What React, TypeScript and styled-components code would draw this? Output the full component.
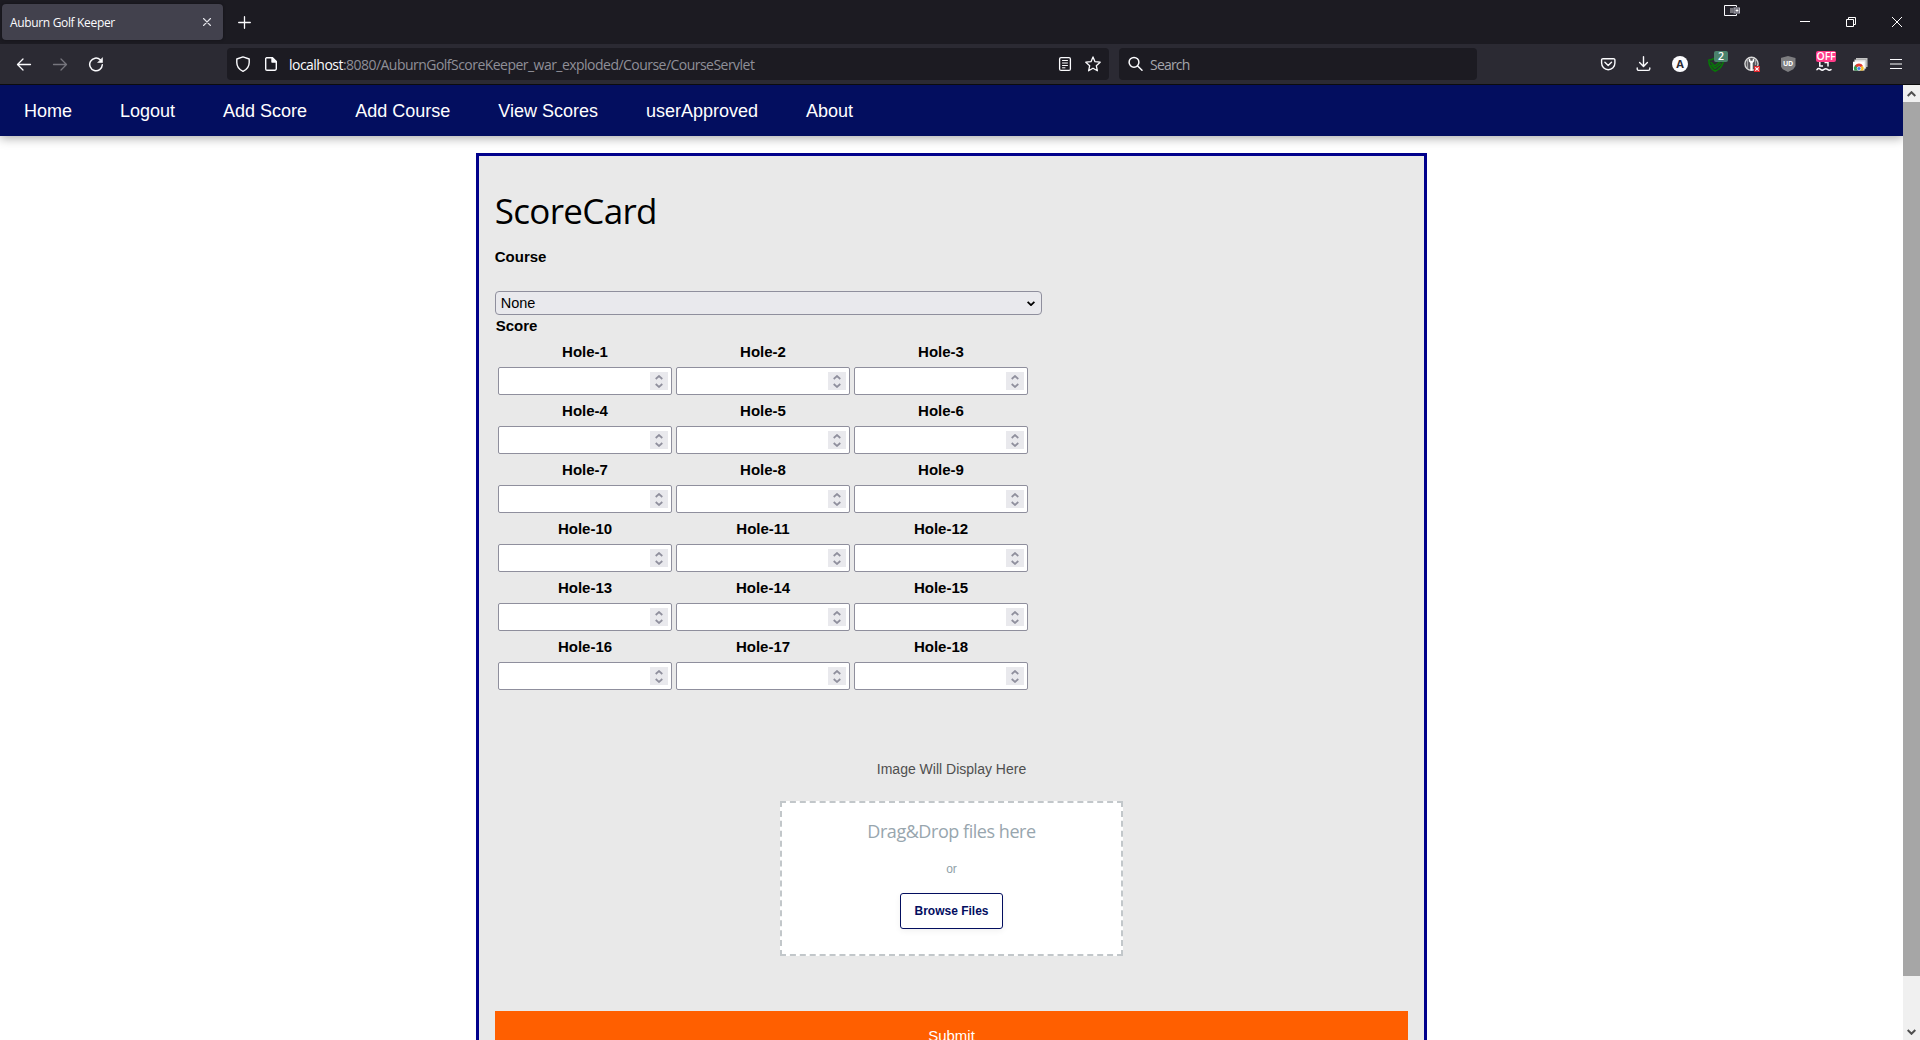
import React from "react";
import styled, { createGlobalStyle } from "styled-components";

const UI = `"Open Sans", "Noto Sans", sans-serif`;
const ARIAL = `"Liberation Sans", Arial, sans-serif`;

const GlobalStyle = createGlobalStyle`
  *, *::before, *::after { box-sizing: border-box; }
  html, body { margin: 0; padding: 0; overflow: hidden; background: #fff; }
  svg { display: block; flex: none; }
`;

const Window = styled.div`
  display: flex;
  flex-direction: column;
  width: 1920px;
  height: 1040px;
  overflow: hidden;
  font-family: ${ARIAL};
`;

/* ---------- browser chrome ---------- */

const TabBar = styled.div`
  display: flex;
  align-items: flex-start;
  height: 44px;
  padding: 4px 0 0 2px;
  background: #1c1b22;
`;

const Tab = styled.div`
  display: flex;
  align-items: center;
  justify-content: space-between;
  width: 221px;
  height: 36px;
  padding: 0 12px 0 8px;
  border-radius: 4px;
  background: #42414d;
  box-shadow: 0 0 3px rgba(0, 0, 0, 0.4);
`;

const TabTitle = styled.span`
  padding-top: 1px;
  font: 12px/18px ${UI};
  letter-spacing: -0.34px;
  color: #fbfbfe;
  white-space: nowrap;
`;

const NewTab = styled.div`
  display: flex;
  justify-content: center;
  width: 43px;
  padding-top: 12px;
`;

const Spacer = styled.div`
  flex: 1;
`;

const CastIndicator = styled.div`
  width: 16px;
  margin: 1px 42px 0 0;
`;

const WindowButton = styled.div`
  display: flex;
  align-items: center;
  justify-content: center;
  width: 46px;
  height: 36px;
`;

const WindowButtons = styled.div`
  display: flex;
`;

const ToolBar = styled.div`
  display: flex;
  align-items: center;
  height: 41px;
  border-bottom: 1px solid #0c0c0d;
  background: #2b2a33;
`;

const NavButtons = styled.div`
  display: flex;
  width: 227px;
  padding-left: 6px;
`;

const ToolCell = styled.div`
  position: relative;
  display: flex;
  align-items: center;
  justify-content: center;
  width: 36px;
  height: 32px;
`;

const Field = styled.div<{ $w: number; $ml?: number }>`
  display: flex;
  align-items: center;
  width: ${(p) => p.$w}px;
  height: 32px;
  margin-left: ${(p) => p.$ml ?? 0}px;
  padding: 0 8px;
  border-radius: 4px;
  background: #1c1b22;
`;

const FieldIcons = styled.div<{ $gap: number }>`
  display: flex;
  gap: ${(p) => p.$gap}px;
`;

const Url = styled.span`
  flex: 1;
  margin-left: 10px;
  padding-top: 2px;
  font: 14px/20px ${UI};
  letter-spacing: -0.53px;
  color: #8f8f98;
  white-space: nowrap;

  b {
    font-weight: 400;
    color: #fbfbfe;
  }
`;

const SearchHint = styled.span`
  margin-left: 7px;
  padding-top: 2px;
  font: 14px/20px ${UI};
  letter-spacing: -0.8px;
  color: #a5a5ab;
`;

const Extensions = styled.div`
  display: flex;
  padding-right: 6px;
`;

const Badge = styled.span<{ $bg: string; $left: number; $w: number }>`
  position: absolute;
  top: 3px;
  left: ${(p) => p.$left}px;
  width: ${(p) => p.$w}px;
  height: 11px;
  border-radius: 2px;
  background: ${(p) => p.$bg};
  color: #fff;
  font: 600 10.5px/11px ${UI};
  letter-spacing: -0.2px;
  text-align: center;
`;

/* ---------- page ---------- */

const Viewport = styled.div`
  display: flex;
  height: 955px;
`;

const Page = styled.div`
  display: flex;
  flex-direction: column;
  width: 1903px;
  height: 955px;
  overflow: hidden;
  background: #fff;
`;

const SiteNav = styled.nav`
  display: flex;
  flex: none;
  height: 51px;
  background: #030e5f;
  box-shadow: 0 2px 10px rgba(0, 0, 0, 0.35);
`;

const SiteLink = styled.a`
  padding: 0 24px;
  font: 18px/52px ${ARIAL};
  color: #fff;
  white-space: nowrap;
`;

const Card = styled.main`
  flex: none;
  width: 951.5px;
  height: 960px;
  margin: 17px auto 0;
  padding: 16px;
  border: 3px solid #00008b;
  background: #e9e9e9;
`;

const Title = styled.h1`
  margin: 0;
  font: 400 35px/77px ${UI};
  letter-spacing: -0.68px;
  color: #000;
`;

const Label = styled.div<{ $lh: number; $indent?: number }>`
  padding-left: ${(p) => p.$indent ?? 0}px;
  font: bold 15px/${(p) => p.$lh}px ${ARIAL};
  color: #000;
`;

const Select = styled.div`
  display: flex;
  align-items: center;
  justify-content: space-between;
  width: 547px;
  height: 24px;
  margin-top: 26px;
  padding: 0 6px 0 5px;
  border: 1px solid #8f8f9d;
  border-radius: 4px;
  background: #e9e9ed;
  font: 14.5px/22px ${ARIAL};
  color: #000;
`;

const Holes = styled.div`
  display: grid;
  grid-template-columns: repeat(3, 174px);
  column-gap: 4px;
  padding-left: 3.25px;
`;

const Hole = styled.label`
  display: flex;
  flex-direction: column;
  height: 59px;
  font: bold 15px/31px ${ARIAL};
  text-align: center;
  color: #000;
`;

const NumberBox = styled.span`
  display: flex;
  align-items: center;
  justify-content: flex-end;
  height: 28px;
  padding-right: 3px;
  border: 1px solid #8f8f9d;
  border-radius: 2px;
  background: #fff;
`;

const Spinner = styled.span`
  display: flex;
  align-items: center;
  justify-content: center;
  width: 18px;
  height: 18px;
  background: #e9e9ed;
`;

const Preview = styled.div`
  margin: 69px 0 22px;
  font: 14px/20px ${ARIAL};
  text-align: center;
  color: #4f4f4f;
`;

const DropZone = styled.div`
  display: flex;
  flex-direction: column;
  align-items: center;
  width: 343px;
  height: 155px;
  margin: 0 auto;
  padding-top: 16px;
  border: 2px dashed #c2c7ca;
  background: #fff;
`;

const DropHint = styled.div`
  font: 400 18px/24px ${UI};
  letter-spacing: -0.45px;
  color: #98a6ae;
  white-space: nowrap;
`;

const DropOr = styled.div`
  margin: 18px 0 16px;
  font: 12px/16px ${ARIAL};
  color: #90a0a8;
`;

const Browse = styled.button`
  width: 103px;
  height: 36px;
  padding: 0;
  border: 1px solid #030e5f;
  border-radius: 3px;
  background: #fff;
  box-shadow: 0 2px 6px rgba(0, 0, 0, 0.06);
  font: bold 12px/34px ${ARIAL};
  color: #030e5f;
`;

const Submit = styled.button`
  display: block;
  width: 100%;
  height: 50px;
  margin-top: 55px;
  padding: 0;
  border: 0;
  background: #ff5f00;
  font: 15px/50px ${ARIAL};
  color: #fff;
`;

const ScrollBar = styled.div`
  display: flex;
  flex-direction: column;
  width: 17px;
  height: 955px;
  background: #f0f0f0;
`;

const ScrollArrow = styled.div`
  display: flex;
  align-items: center;
  justify-content: center;
  height: 17px;
`;

const ScrollThumb = styled.div`
  height: 874px;
  margin-bottom: auto;
  background: #a6a6a6;
`;

/* ---------- icons ---------- */

type IconProps = { size?: number; color?: string; width?: number; children: React.ReactNode };

const Icon = ({ size = 16, color = "#fbfbfe", width = 1.3, children }: IconProps) => (
  <svg
    width={size}
    height={size}
    viewBox={`0 0 ${size} ${size}`}
    fill="none"
    stroke={color}
    strokeWidth={width}
    strokeLinecap="round"
    strokeLinejoin="round"
  >
    {children}
  </svg>
);

const BackIcon = () => (
  <Icon>
    <path d="M14.5 8.5H1.6M7 3 1.5 8.5 7 14" />
  </Icon>
);

const ForwardIcon = () => (
  <Icon color="#76757d">
    <path d="M1.5 8.5h12.9M9 3l5.500 5.500L9 14" />
  </Icon>
);

const ReloadIcon = () => (
  <Icon width={1.5}>
    <path d="M12.300 3.800A6.300 6.300 0 1 0 14.300 8.700" />
    <path d="M14.500 2v4.500H10z" fill="#fbfbfe" strokeWidth="0.6" />
  </Icon>
);

const ShieldIcon = () => (
  <Icon width={1.4}>
    <path d="M8 .9 14.200 3v3.500c0 4-2.300 7-6.200 8.800C4.100 13.500 1.800 10.500 1.800 6.500V3z" />
  </Icon>
);

const PageIcon = () => (
  <Icon width={1.4}>
    <path d="M3.500 1.700h6l3.800 3.800v7.300a1.500 1.500 0 0 1-1.500 1.500H4a1.300 1.300 0 0 1-1.300-1.300V2.500z" />
    <path d="M9 1.700v4.300h4.300z" fill="#fbfbfe" />
  </Icon>
);

const ReaderIcon = () => (
  <Icon width={1.3}>
    <rect x="2.600" y="1.600" width="10.800" height="12.800" rx="1.500" />
    <path d="M5.500 4.500h5M5.500 7h5M5.500 9.500h5M5.500 11.800h2.500" strokeWidth="1" />
  </Icon>
);

const StarIcon = () => (
  <Icon width={1.3}>
    <path d="m8 .9 2 4.800 5.200.5-3.900 3.500 1.100 5.100L8 12.200l-4.400 2.600 1.100-5.100L.8 6.200 6 5.700z" />
  </Icon>
);

const SearchIcon = () => (
  <Icon width={1.5}>
    <circle cx="7" cy="6.300" r="4.900" />
    <path d="m10.700 10 4.300 4.300" />
  </Icon>
);

const PocketIcon = () => (
  <Icon width={1.4}>
    <path d="M3 2.700h10.500a1.400 1.400 0 0 1 1.400 1.400v3a6.600 6.600 0 0 1-13.300 0v-3A1.400 1.400 0 0 1 3 2.700z" />
    <path d="m4.900 6.300 3.300 3.100 3.300-3.100" />
  </Icon>
);

const DownloadIcon = () => (
  <Icon width={1.4}>
    <path d="M7.500.8v9.400M3.600 6.500l3.900 3.900 3.900-3.900M1.200 12v.8a1.600 1.600 0 0 0 1.600 1.600h9.400a1.600 1.600 0 0 0 1.600-1.600V12" />
  </Icon>
);

const AccountCircle = styled.span`
  width: 16px;
  height: 16px;
  border-radius: 50%;
  background: #fbfbfe;
  color: #2b2a33;
  font: 700 11px/16px ${UI};
  text-align: center;
`;

const CheckShieldIcon = () => (
  <Icon color="#067a06" width={1.5}>
    <path d="M.8 4c2 0 4-.5 5.700-1.800C8.500 3.600 11 4 15.500 4c-.3 5-3.500 9-8.500 11.200C3 13 .8 9 .8 4z" />
    <path d="M3 6.500 6.800 10 13 5M3.800 9.500 7 12.500 12.500 8" />
  </Icon>
);

const KeyIcon = () => (
  <svg width="16" height="16" viewBox="0 0 16 16">
    <circle cx="7.500" cy="7.800" r="6.600" fill="#55545a" stroke="#d8d8d8" strokeWidth="1.400" />
    <path d="M3.500 4v8M11.500 4v5" stroke="#a5a5a8" strokeWidth="1.200" />
    <path d="M4.800 2.300v3l1.500 1.700v7.500h2.400V7l1.500-1.700v-3L8.600 3.500v1.200H6.400V3.500z" fill="#fff" />
    <path d="M10 10h6v6h-6z" fill="#e0252b" />
    <path d="m11.300 11.300 3.400 3.400m0-3.400-3.400 3.400" stroke="#fff" strokeWidth="1.200" />
  </svg>
);

const DimShield = styled.span`
  display: flex;
  justify-content: center;
  width: 15px;
  height: 16px;
  background: #7d7d80;
  clip-path: polygon(50% 0, 100% 12%, 100% 62%, 85% 83%, 50% 100%, 15% 83%, 0 62%, 0 12%);
  color: #fff;
  font: 700 7px/15px ${UI};
  letter-spacing: -0.3px;
`;

const WavesIcon = () => (
  <Icon width={1.5}>
    <path d="M3.800 6v4H7M8.500 6.500h3.700M12 6v4.500" strokeLinecap="butt" strokeLinejoin="miter" />
    <path d="M1 13.600c1-1.300 2.300-1.300 3.500-.2 1.200 1 2.300 1 3.500 0 1.200-1 2.300-1 3.500 0 1.200 1 2.300 1 3.500.2" />
  </Icon>
);

const GalleryIcon = () => (
  <svg width="16" height="16" viewBox="0 0 16 16">
    <path d="M4 2h11.500v9H4z" fill="#c4c4c4" />
    <path d="M2.500 3.700h11.500v9H2.500z" fill="#e8e8e8" stroke="#8a8a8a" strokeWidth=".5" />
    <path d="M1 5.700h11.500v8.800H1z" fill="#fff" />
    <path d="M2.500 14.500a4.300 4.300 0 0 1 1.700-6L7 14.500z" fill="#2e9e4f" />
    <path d="M3 10a4.500 4.500 0 0 1 8 0L7 12z" fill="#e33b2e" />
    <path d="M7 12l4-2a4.500 4.500 0 0 1 .3 4.500H7z" fill="#f5bd1f" />
    <circle cx="7" cy="12.500" r="1.900" fill="#3b7de8" stroke="#fff" strokeWidth=".6" />
  </svg>
);

const MenuIcon = () => (
  <Icon width={1.2}>
    <path d="M2 3.500h12M2 8h12M2 12.500h12" strokeLinecap="butt" />
  </Icon>
);

const CastIcon = () => (
  <svg width="16" height="11" viewBox="0 0 16 11">
    <path d="M12.500 2V.5H.5v10h12V9" fill="#23222b" stroke="#fbfbfe" />
    <path d="M6 3h3v5H6z" fill="#77767d" />
    <rect x="10" y="3" width="5.500" height="5" fill="#4a4956" stroke="#b7b7c2" />
    <path d="M11.500 4.500h3v2h-3z" fill="#fff" />
  </svg>
);

const Chevron = ({ up, color, w = 8, h = 5 }: { up?: boolean; color: string; w?: number; h?: number }) => (
  <svg width={w} height={h} viewBox="0 0 8 5" fill="none" stroke={color} strokeWidth={1.8}>
    <path d={up ? "M.6 4.200 4 .9l3.400 3.300" : "M.6.8 4 4.100 7.400.8"} />
  </svg>
);

const SpinArrows = () => (
  <svg width="8" height="13" viewBox="0 0 8 13" fill="none" stroke="#8f8f9d" strokeWidth="1.700">
    <path d="M.7 4 4 1l3.300 3M.7 9 4 12l3.300-3" />
  </svg>
);

const links = ["Home", "Logout", "Add Score", "Add Course", "View Scores", "userApproved", "About"];
const holes = Array.from({ length: 18 }, (_, i) => i + 1);

export default function App() {
  return (
    <Window>
      <GlobalStyle />
      <TabBar>
        <Tab>
          <TabTitle>Auburn Golf Keeper</TabTitle>
          <Icon size={8} width={1.1} color="#e4e4ea">
            <path d="m.5.5 7 7m0-7-7 7" />
          </Icon>
        </Tab>
        <NewTab>
          <Icon size={13} width={1.3}>
            <path d="M6.500 .7v11.600M.7 6.500h11.600" />
          </Icon>
        </NewTab>
        <Spacer />
        <CastIndicator>
          <CastIcon />
        </CastIndicator>
        <WindowButtons>
          <WindowButton>
            <svg width="10" height="10" viewBox="0 0 10 10">
              <path d="M0 4.500h10" stroke="#fff" />
            </svg>
          </WindowButton>
          <WindowButton>
            <svg width="10" height="10" viewBox="0 0 10 10" fill="none" stroke="#fff">
              <path d="M.5 2.500h7v7h-7zM2.500 2.500v-2h7v7h-2" />
            </svg>
          </WindowButton>
          <WindowButton>
            <svg width="10" height="10" viewBox="0 0 10 10" stroke="#fff">
              <path d="m0 0 10 10M10 0 0 10" />
            </svg>
          </WindowButton>
        </WindowButtons>
      </TabBar>

      <ToolBar>
        <NavButtons>
          <ToolCell><BackIcon /></ToolCell>
          <ToolCell><ForwardIcon /></ToolCell>
          <ToolCell><ReloadIcon /></ToolCell>
        </NavButtons>
        <Field $w={882}>
          <FieldIcons $gap={12}>
            <ShieldIcon />
            <PageIcon />
          </FieldIcons>
          <Url>
            <b>localhost</b>:8080/AuburnGolfScoreKeeper_war_exploded/Course/CourseServlet
          </Url>
          <FieldIcons $gap={12}>
            <ReaderIcon />
            <StarIcon />
          </FieldIcons>
        </Field>
        <Field $w={358} $ml={10}>
          <SearchIcon />
          <SearchHint>Search</SearchHint>
        </Field>
        <Spacer />
        <Extensions>
          <ToolCell><PocketIcon /></ToolCell>
          <ToolCell><DownloadIcon /></ToolCell>
          <ToolCell><AccountCircle>A</AccountCircle></ToolCell>
          <ToolCell>
            <CheckShieldIcon />
            <Badge $bg="#4a826c" $left={16} $w={14}>2</Badge>
          </ToolCell>
          <ToolCell><KeyIcon /></ToolCell>
          <ToolCell><DimShield>UD</DimShield></ToolCell>
          <ToolCell>
            <WavesIcon />
            <Badge $bg="#ff3b89" $left={10} $w={20}>OFF</Badge>
          </ToolCell>
          <ToolCell><GalleryIcon /></ToolCell>
          <ToolCell><MenuIcon /></ToolCell>
        </Extensions>
      </ToolBar>

      <Viewport>
        <Page>
          <SiteNav>
            {links.map((l) => (
              <SiteLink key={l}>{l}</SiteLink>
            ))}
          </SiteNav>
          <Card>
            <Title>ScoreCard</Title>
            <Label $lh={16}>Course</Label>
            <Select>
              <span>None</span>
              <Chevron color="#000" />
            </Select>
            <Label $lh={21} $indent={1}>Score</Label>
            <Holes>
              {holes.map((n) => (
                <Hole key={n}>
                  Hole-{n}
                  <NumberBox>
                    <Spinner>
                      <SpinArrows />
                    </Spinner>
                  </NumberBox>
                </Hole>
              ))}
            </Holes>
            <Preview>Image Will Display Here</Preview>
            <DropZone>
              <DropHint>Drag&amp;Drop files here</DropHint>
              <DropOr>or</DropOr>
              <Browse>Browse Files</Browse>
            </DropZone>
            <Submit>Submit</Submit>
          </Card>
        </Page>
        <ScrollBar>
          <ScrollArrow><Chevron up color="#505050" w={9} h={6} /></ScrollArrow>
          <ScrollThumb />
          <ScrollArrow><Chevron color="#505050" w={9} h={6} /></ScrollArrow>
        </ScrollBar>
      </Viewport>
    </Window>
  );
}
